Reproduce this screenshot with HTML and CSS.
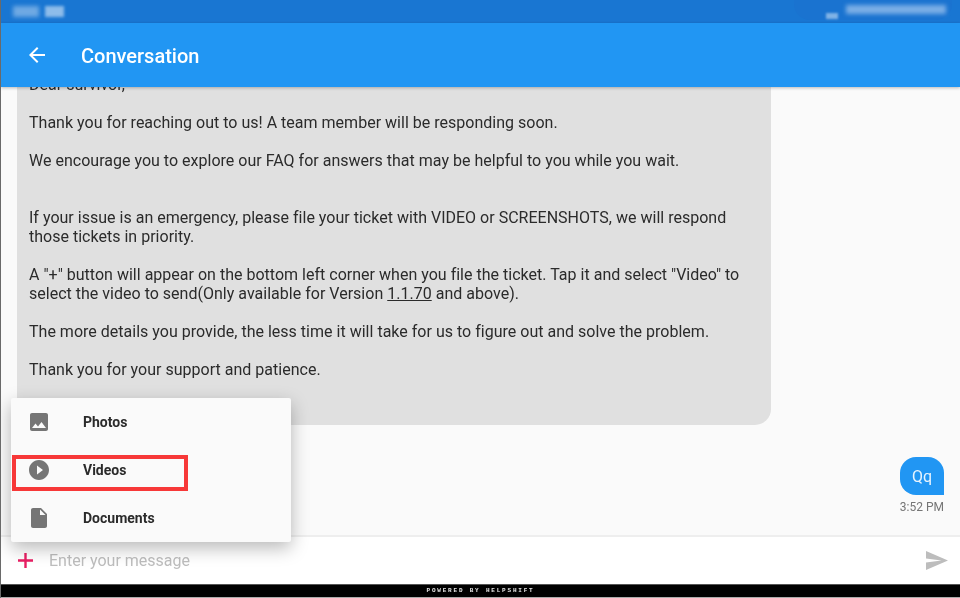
FILE: index.html
```html
<!DOCTYPE html>
<html lang="en">
<head>
<meta charset="utf-8">
<title>Conversation</title>
<link rel="stylesheet" href="styles.css">
</head>
<body>
<div class="screen">
  <div class="statusbar">
    <div class="blur-left"><span class="blur-a"></span><span class="blur-b"></span></div>
    <div class="blur-right"><span class="blur-c"></span><span class="blur-d"></span></div>
  </div>
  <header class="appbar">
    <svg class="back" viewBox="0 0 24 24" width="24" height="24"><path d="M20 11H7.830l5.590-5.590L12 4l-8 8 8 8 1.410-1.410L7.830 13H20z"/></svg>
    <h1 class="title">Conversation</h1>
  </header>
  <main class="messages">
    <div class="bubble-in">
      <p>Dear survivor,</p>
      <p>Thank you for reaching out to us! A team member will be responding soon.</p>
      <p class="gap">We encourage you to explore our FAQ for answers that may be helpful to you while you wait.</p>
      <p>If your issue is an emergency, please file your ticket with VIDEO or SCREENSHOTS, we will respond<br>those tickets in priority.</p>
      <p>A "+" button will appear on the bottom left corner when you file the ticket. Tap it and select "Video" to<br>select the video to send(Only available for Version <u>1.1.70</u> and above).</p>
      <p>The more details you provide, the less time it will take for us to figure out and solve the problem.</p>
      <p>Thank you for your support and patience.</p>
    </div>
    <div class="outgoing">
      <div class="bubble-out">Qq</div>
      <div class="time">3:52 PM</div>
    </div>
  </main>
  <div class="composer">
    <svg class="plus" viewBox="0 0 15 15" width="15" height="15"><path d="M6.300 0h2.400v6.300H15v2.400H8.700V15H6.300V8.700H0V6.300h6.300z"/></svg>
    <span class="placeholder">Enter your message</span>
    <svg class="send" viewBox="0 0 22 19" width="22" height="19"><path d="M0 0l22 9.500L0 19v-7.400L15.500 9.500 0 7.400z"/></svg>
  </div>
  <footer class="powered">POWERED BY HELPSHIFT</footer>
  <div class="menu">
    <div class="menu-item">
      <svg class="menu-icon" viewBox="0 0 24 24" width="24" height="24"><path d="M21 19V5c0-1.100-.9-2-2-2H5c-1.100 0-2 .9-2 2v14c0 1.100.9 2 2 2h14c1.100 0 2-.9 2-2zM8.500 13.500l2.500 3.010L14.500 12l4.500 6H5l3.500-4.500z"/></svg>
      <span>Photos</span>
    </div>
    <div class="menu-item">
      <svg class="menu-icon" viewBox="0 0 24 24" width="24" height="24"><path d="M12 2C6.480 2 2 6.480 2 12s4.480 10 10 10 10-4.480 10-10S17.520 2 12 2zm-2 14.500v-9l6 4.500-6 4.500z"/></svg>
      <span>Videos</span>
    </div>
    <div class="menu-item">
      <svg class="menu-icon" viewBox="0 0 24 24" width="24" height="24"><path d="M6 2c-1.100 0-2 .9-2 2v16c0 1.100.9 2 2 2h12c1.100 0 2-.9 2-2V8l-6-6H6zm7 7V3.500L18.500 9H13z"/></svg>
      <span>Documents</span>
    </div>
  </div>
  <div class="highlight"></div>
</div>
</body>
</html>
```
FILE: styles.css
```css
* { box-sizing: border-box; }
html, body { margin: 0; padding: 0; }
body { background: #fff; font-family: Roboto, "Liberation Sans", sans-serif; }
.screen {
  position: relative;
  width: 960px;
  height: 598px;
  display: flex;
  flex-direction: column;
  overflow: hidden;
  border-left: 1px solid #6a6a6a;
  background: #fafafa;
  filter: blur(.35px);
}
.statusbar {
  flex: 0 0 23px;
  background: #1976d2;
  display: flex;
  justify-content: space-between;
  align-items: flex-start;
}
.blur-left { display: flex; gap: 6px; margin: 6px 0 0 12px; }
.blur-a { width: 26px; height: 11px; background: #6fa9e3; filter: blur(2px); }
.blur-b { width: 19px; height: 11px; background: #8dbcea; filter: blur(1.500px); }
.blur-right {
  display: flex;
  align-items: flex-start;
  gap: 8px;
  height: 20px;
  margin-right: 8px;
  padding: 5px 6px 0 32px;
  background: #1a73d0;
  border-radius: 0 0 16px 16px;
}
.blur-c { width: 12px; height: 6px; margin-top: 8px; background: #7fb2e6; filter: blur(1px); }
.blur-d { width: 100px; height: 9px; background: #7aaee6; filter: blur(2px); }
.appbar {
  flex: 0 0 64px;
  background: #2196f3;
  display: flex;
  align-items: center;
  padding-left: 24px;
  box-shadow: 0 1px 3px rgba(0, 0, 0, .25);
  position: relative;
  z-index: 1;
}
.back { fill: #fff; flex: none; }
.title {
  margin: 2px 0 0 32px;
  color: #fff;
  font-size: 20px;
  font-weight: 500;
}
.messages {
  flex: 0 0 448px;
  min-height: 0;
  overflow: hidden;
  display: flex;
  flex-direction: column;
  justify-content: flex-end;
  padding: 0 16px 20px 16px;
  background: #fafafa;
}
.bubble-in {
  flex: none;
  width: 754px;
  padding: 0 12px 46px;
  background: #e0e0e0;
  border-radius: 0 0 16px 16px;
  color: #2b2b2b;
  font-size: 16px;
  letter-spacing: .012px;
  line-height: 19px;
}
.bubble-in p { margin: 0 0 19px; }
.bubble-in p.gap { margin-bottom: 38px; }
.bubble-in p:last-child { margin-bottom: 0; }
.outgoing {
  flex: none;
  display: flex;
  flex-direction: column;
  align-items: flex-end;
  margin-top: 32px;
}
.bubble-out {
  height: 38px;
  width: 44px;
  padding-top: 1px;
  display: flex;
  align-items: center;
  justify-content: center;
  background: #2196f3;
  color: #e8f4fe;
  font-size: 16px;
  border-radius: 16px 16px 0 16px;
}
.time {
  margin-top: 5px;
  color: #757575;
  font-size: 12px;
  line-height: 15px;
}
.composer {
  flex: 0 0 49px;
  background: #fff;
  border-top: 2px solid #eee;
  display: flex;
  align-items: center;
  padding: 0 12px 0 17px;
}
.plus { fill: #e91e63; flex: none; }
.placeholder {
  margin-left: 16px;
  color: #bdbdbd;
  font-size: 16px;
  flex: 1;
}
.send { fill: #bdbdbd; flex: none; }
.powered {
  flex: 0 0 14px;
  background: #000;
  color: #e6e6e6;
  font-family: "Liberation Mono", monospace;
  font-size: 6px;
  font-weight: 700;
  line-height: 12px;
  letter-spacing: 1.800px;
  text-align: center;
  border-top: 1px solid #555;
  border-bottom: 1px solid #aaa;
}
.menu {
  position: absolute;
  left: 10px;
  top: 398px;
  width: 280px;
  height: 144px;
  background: #fafafa;
  border-radius: 2px;
  box-shadow: 0 6px 18px rgba(0, 0, 0, .28);
}
.menu-item {
  height: 48px;
  display: flex;
  align-items: center;
  padding-left: 16px;
  color: #2b2b2b;
  font-size: 14px;
  font-weight: 700;
}
.menu-icon { fill: #757575; flex: none; margin-right: 32px; }
.highlight {
  position: absolute;
  left: 11px;
  top: 455px;
  width: 176px;
  height: 36px;
  border: 4px solid #f73838;
}
```
